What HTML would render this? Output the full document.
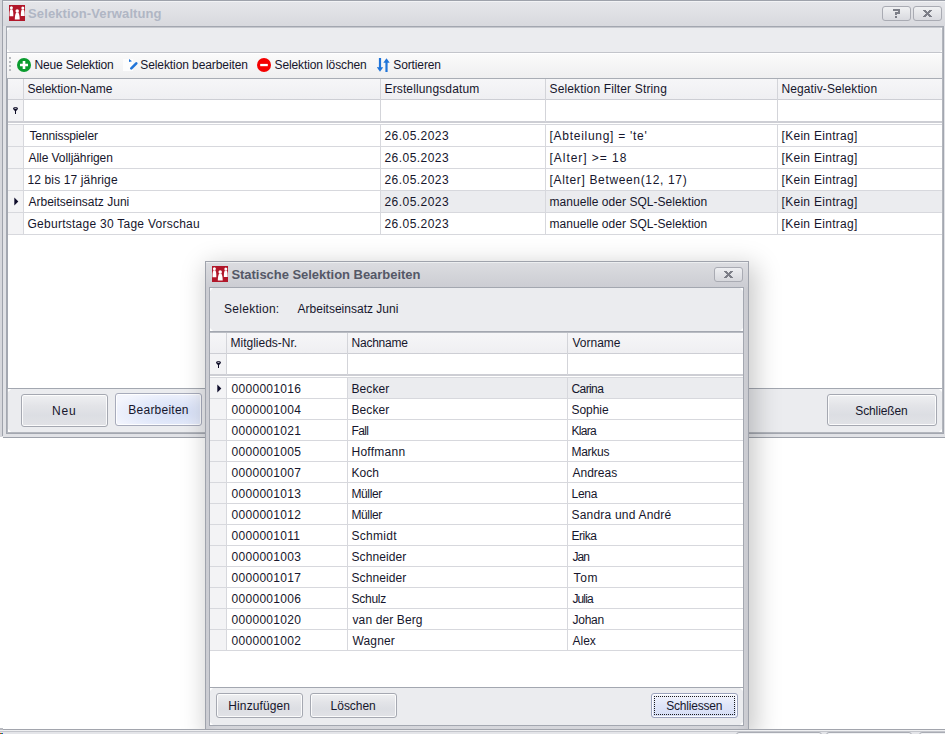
<!DOCTYPE html><html><head><meta charset="utf-8"><style>
*{margin:0;padding:0;box-sizing:border-box}
html,body{width:945px;height:734px;overflow:hidden;background:#fff;font-family:"Liberation Sans", sans-serif;font-size:12px;color:#16162c}
.a{position:absolute}
.t{position:absolute;white-space:nowrap;line-height:14px;font-size:12px}
.b{font-weight:bold;font-size:13px}
.btn{position:absolute;border:1px solid #a5a8b1;border-radius:3px;background:linear-gradient(#eff0f2,#e3e4e8 35%,#dcdee3 65%,#e1e2e6);box-shadow:inset 0 0 0 1px rgba(255,255,255,0.85)}
</style></head><body><div class="a" style="left:0px;top:0px;width:945px;height:438px;background:#e1e2e6"></div>
<div class="a" style="left:0px;top:0px;width:2px;height:437px;background:#d6d7dc"></div>
<div class="a" style="left:2px;top:0px;width:943px;height:1px;background:#9ea2ab"></div>
<div class="a" style="left:2px;top:0px;width:1px;height:436px;background:#9ea2ab"></div>
<div class="a" style="left:3px;top:437px;width:942px;height:1px;background:#9ea2ab"></div>
<div class="a" style="left:0px;top:437px;width:3px;height:1px;background:#fff"></div>
<div class="a" style="left:3px;top:1px;width:942px;height:1px;background:#f2f3f5"></div>
<div class="a" style="left:3px;top:2px;width:942px;height:24px;background:linear-gradient(#e5e6ea,#d8d9de)"></div>
<svg class="a" style="left:9px;top:5px" width="16" height="16" viewBox="0 0 16 16"><rect width="16" height="16" fill="#b1172a"/><g fill="#fff"><circle cx="2.4" cy="2.8" r="1.5"/><path d="M1.5 4.3C0.6 5.5 0.4 8 0.5 11.3L4.3 11.3C4.4 8 4.2 5.5 3.3 4.3z"/><circle cx="13.8" cy="3" r="1.5"/><path d="M12.9 4.5C12 5.7 11.8 8 11.9 11L15.7 11C15.7 8 15.5 5.7 14.7 4.5z"/><circle cx="8.2" cy="5.9" r="1.75"/><path d="M7.2 7.5C6.2 9 5.8 11.5 5.8 14.6L10.7 14.6C10.7 11.5 10.3 9 9.3 7.5z"/></g></svg>
<div class="t b" style="left:28.1px;top:7px;letter-spacing:0.105px;color:#b0b6c4">Selektion-Verwaltung</div>
<div class="a" style="left:882px;top:6px;width:29px;height:15px;border:1px solid #a9abb3;border-radius:3px;background:linear-gradient(#f0f1f3,#d9dadf)"></div>
<svg class="a" style="left:893px;top:9px" width="8" height="9" viewBox="0 0 8 9" shape-rendering="crispEdges"><g fill="#72747e" opacity="0.9"><rect x="0" y="0" width="7" height="2"/><rect x="5" y="0" width="2" height="4"/><rect x="2" y="3" width="5" height="2"/><rect x="2" y="4" width="2" height="2"/><rect x="2" y="7" width="2" height="2"/></g></svg>
<div class="a" style="left:913px;top:6px;width:29px;height:15px;border:1px solid #a9abb3;border-radius:3px;background:linear-gradient(#f0f1f3,#d9dadf)"></div>
<svg class="a" style="left:923px;top:10px" width="9" height="7" viewBox="0 0 9 7" shape-rendering="crispEdges"><g fill="#72747e" opacity="0.9"><rect x="0" y="0" width="1" height="1"/><rect x="1" y="0" width="1" height="1"/><rect x="2" y="0" width="1" height="1"/><rect x="6" y="0" width="1" height="1"/><rect x="7" y="0" width="1" height="1"/><rect x="8" y="0" width="1" height="1"/><rect x="1" y="1" width="1" height="1"/><rect x="2" y="1" width="1" height="1"/><rect x="3" y="1" width="1" height="1"/><rect x="5" y="1" width="1" height="1"/><rect x="6" y="1" width="1" height="1"/><rect x="7" y="1" width="1" height="1"/><rect x="2" y="2" width="1" height="1"/><rect x="3" y="2" width="1" height="1"/><rect x="4" y="2" width="1" height="1"/><rect x="5" y="2" width="1" height="1"/><rect x="6" y="2" width="1" height="1"/><rect x="3" y="3" width="1" height="1"/><rect x="4" y="3" width="1" height="1"/><rect x="5" y="3" width="1" height="1"/><rect x="2" y="4" width="1" height="1"/><rect x="3" y="4" width="1" height="1"/><rect x="4" y="4" width="1" height="1"/><rect x="5" y="4" width="1" height="1"/><rect x="6" y="4" width="1" height="1"/><rect x="1" y="5" width="1" height="1"/><rect x="2" y="5" width="1" height="1"/><rect x="3" y="5" width="1" height="1"/><rect x="5" y="5" width="1" height="1"/><rect x="6" y="5" width="1" height="1"/><rect x="7" y="5" width="1" height="1"/><rect x="0" y="6" width="1" height="1"/><rect x="1" y="6" width="1" height="1"/><rect x="2" y="6" width="1" height="1"/><rect x="6" y="6" width="1" height="1"/><rect x="7" y="6" width="1" height="1"/><rect x="8" y="6" width="1" height="1"/></g></svg>
<div class="a" style="left:6px;top:26px;width:938px;height:408px;background:#ebecef;border:1px solid #a3a7b0"></div>
<div class="a" style="left:7px;top:27px;width:936px;height:1px;background:#c6c8ce"></div>
<svg class="a" style="left:7px;top:28px" width="3" height="3" viewBox="0 0 3 3"><path d="M0 0H3L0 3z" fill="#fff" transform="rotate(0 1.5 1.5)"/></svg>
<svg class="a" style="left:940px;top:28px" width="3" height="3" viewBox="0 0 3 3"><path d="M0 0H3L0 3z" fill="#fff" transform="rotate(90 1.5 1.5)"/></svg>
<svg class="a" style="left:7px;top:49px" width="3" height="3" viewBox="0 0 3 3"><path d="M0 0H3L0 3z" fill="#fff" transform="rotate(270 1.5 1.5)"/></svg>
<svg class="a" style="left:940px;top:49px" width="3" height="3" viewBox="0 0 3 3"><path d="M0 0H3L0 3z" fill="#fff" transform="rotate(180 1.5 1.5)"/></svg>
<div class="a" style="left:7px;top:52px;width:936px;height:1px;background:#c3c5cb"></div>
<div class="a" style="left:7px;top:53px;width:935px;height:25px;background:linear-gradient(#fbfbfb,#efeff0)"></div>
<div class="a" style="left:7px;top:53px;width:935px;height:1px;background:#fff"></div>
<div class="a" style="left:9px;top:57px;width:2px;height:2px;background:#b9bbc0"></div>
<div class="a" style="left:9px;top:61px;width:2px;height:2px;background:#b9bbc0"></div>
<div class="a" style="left:9px;top:65px;width:2px;height:2px;background:#b9bbc0"></div>
<div class="a" style="left:9px;top:69px;width:2px;height:2px;background:#b9bbc0"></div>
<svg class="a" style="left:17px;top:58px" width="14" height="14" viewBox="0 0 14 14"><circle cx="7" cy="7" r="7" fill="#0a9b2e"/><path d="M7 3V11M3 7H11" stroke="#fff" stroke-width="2.6"/></svg>
<div class="t" style="left:34.4px;top:58px;letter-spacing:-0.154px;">Neue Selektion</div>
<svg class="a" style="left:123px;top:58px" width="16" height="14" viewBox="0 0 16 14"><rect x="0" y="1" width="10" height="12" fill="#fdfdfd"/><path d="M6 1L9 3.2L6 4z" fill="#1f74d9"/><path d="M8.3 10.3L13.3 5.3" stroke="#1f74d9" stroke-width="2.6" stroke-linecap="round"/></svg>
<div class="t" style="left:140.3px;top:58px;letter-spacing:-0.089px;">Selektion bearbeiten</div>
<svg class="a" style="left:257px;top:58px" width="14" height="14" viewBox="0 0 14 14"><circle cx="7" cy="7" r="7" fill="#f40000"/><rect x="3.2" y="5.9" width="7.6" height="2.3" fill="#fff"/></svg>
<div class="t" style="left:274.6px;top:58px;letter-spacing:-0.125px;">Selektion löschen</div>
<svg class="a" style="left:377px;top:57px" width="13" height="16" viewBox="0 0 13 16"><path d="M3 1V12.5" stroke="#1f74d9" stroke-width="2.2"/><path d="M-0.2 10.2L3 14.8L6.2 10.2z" fill="#1f74d9"/><path d="M9.5 15V3.5" stroke="#1f74d9" stroke-width="2.2"/><path d="M6.3 5.8L9.5 1.2L12.7 5.8z" fill="#1f74d9"/></svg>
<div class="t" style="left:393.3px;top:58px;letter-spacing:-0.125px;">Sortieren</div>
<div class="a" style="left:7px;top:78px;width:936px;height:311px;background:#fff;border-left:1px solid #a3a7b0;border-bottom:1px solid #a3a7b0"></div>
<div class="a" style="left:7px;top:78px;width:936px;height:1px;background:#a9adb5"></div>
<div class="a" style="left:8px;top:79px;width:935px;height:20px;background:linear-gradient(#f6f6f8,#efeff2)"></div>
<div class="a" style="left:8px;top:99px;width:935px;height:1px;background:#cdced4"></div>
<div class="a" style="left:8px;top:100px;width:15px;height:21px;background:#f3f3f5"></div>
<div class="a" style="left:8px;top:121px;width:935px;height:2px;background:#cdced4"></div>
<div class="a" style="left:8px;top:124px;width:935px;height:1px;background:#d7d8dd"></div>
<div class="a" style="left:23px;top:79px;width:1px;height:43px;background:#d3d4d9"></div>
<div class="a" style="left:380px;top:79px;width:1px;height:43px;background:#d3d4d9"></div>
<div class="a" style="left:545px;top:79px;width:1px;height:43px;background:#d3d4d9"></div>
<div class="a" style="left:777px;top:79px;width:1px;height:43px;background:#d3d4d9"></div>
<div class="t" style="left:27.5px;top:82px;letter-spacing:-0.038px;">Selektion-Name</div>
<div class="t" style="left:384.5px;top:82px;letter-spacing:0.133px;">Erstellungsdatum</div>
<div class="t" style="left:549.5px;top:82px;letter-spacing:0.15px;">Selektion Filter String</div>
<div class="t" style="left:781.5px;top:82px;letter-spacing:0.094px;">Negativ-Selektion</div>
<svg class="a" style="left:13px;top:107px" width="5" height="7" viewBox="0 0 5 7"><ellipse cx="2.5" cy="1.6" rx="2.5" ry="1.6" fill="#0d0c26"/><ellipse cx="2.5" cy="1.3" rx="1.2" ry="0.55" fill="#fff" opacity="0.85"/><path d="M0.7 2.4H4.3L3 4.3V7H2V4.3z" fill="#0d0c26"/></svg>
<div class="a" style="left:8px;top:125px;width:15px;height:21px;background:#f3f3f5"></div>
<div class="a" style="left:8px;top:146px;width:935px;height:1px;background:#d7d8dd"></div>
<div class="a" style="left:23px;top:125px;width:1px;height:21px;background:#d7d8dd"></div>
<div class="a" style="left:380px;top:125px;width:1px;height:21px;background:#d7d8dd"></div>
<div class="a" style="left:545px;top:125px;width:1px;height:21px;background:#d7d8dd"></div>
<div class="a" style="left:777px;top:125px;width:1px;height:21px;background:#d7d8dd"></div>
<div class="t" style="left:29.5px;top:129px;letter-spacing:-0.133px;">Tennisspieler</div>
<div class="t" style="left:384.5px;top:129px;letter-spacing:0.444px;">26.05.2023</div>
<div class="t" style="left:549.5px;top:129px;letter-spacing:0.724px;">[Abteilung] = 'te'</div>
<div class="t" style="left:781.5px;top:129px;letter-spacing:0.292px;">[Kein Eintrag]</div>
<div class="a" style="left:8px;top:147px;width:15px;height:21px;background:#f3f3f5"></div>
<div class="a" style="left:8px;top:168px;width:935px;height:1px;background:#d7d8dd"></div>
<div class="a" style="left:23px;top:147px;width:1px;height:21px;background:#d7d8dd"></div>
<div class="a" style="left:380px;top:147px;width:1px;height:21px;background:#d7d8dd"></div>
<div class="a" style="left:545px;top:147px;width:1px;height:21px;background:#d7d8dd"></div>
<div class="a" style="left:777px;top:147px;width:1px;height:21px;background:#d7d8dd"></div>
<div class="t" style="left:28.5px;top:151px;letter-spacing:-0.062px;">Alle Volljährigen</div>
<div class="t" style="left:384.5px;top:151px;letter-spacing:0.444px;">26.05.2023</div>
<div class="t" style="left:549.5px;top:151px;letter-spacing:0.958px;">[Alter] &gt;= 18</div>
<div class="t" style="left:781.5px;top:151px;letter-spacing:0.292px;">[Kein Eintrag]</div>
<div class="a" style="left:8px;top:169px;width:15px;height:21px;background:#f3f3f5"></div>
<div class="a" style="left:8px;top:190px;width:935px;height:1px;background:#d7d8dd"></div>
<div class="a" style="left:23px;top:169px;width:1px;height:21px;background:#d7d8dd"></div>
<div class="a" style="left:380px;top:169px;width:1px;height:21px;background:#d7d8dd"></div>
<div class="a" style="left:545px;top:169px;width:1px;height:21px;background:#d7d8dd"></div>
<div class="a" style="left:777px;top:169px;width:1px;height:21px;background:#d7d8dd"></div>
<div class="t" style="left:27.5px;top:173px;letter-spacing:0.125px;">12 bis 17 jährige</div>
<div class="t" style="left:384.5px;top:173px;letter-spacing:0.444px;">26.05.2023</div>
<div class="t" style="left:549.5px;top:173px;letter-spacing:0.655px;">[Alter] Between(12, 17)</div>
<div class="t" style="left:781.5px;top:173px;letter-spacing:0.292px;">[Kein Eintrag]</div>
<div class="a" style="left:8px;top:191px;width:15px;height:21px;background:#f3f3f5"></div>
<div class="a" style="left:381px;top:191px;width:562px;height:21px;background:#ebecef"></div>
<div class="a" style="left:8px;top:212px;width:935px;height:1px;background:#d7d8dd"></div>
<div class="a" style="left:23px;top:191px;width:1px;height:21px;background:#d7d8dd"></div>
<div class="a" style="left:380px;top:191px;width:1px;height:21px;background:#d7d8dd"></div>
<div class="a" style="left:545px;top:191px;width:1px;height:21px;background:#d7d8dd"></div>
<div class="a" style="left:777px;top:191px;width:1px;height:21px;background:#d7d8dd"></div>
<div class="t" style="left:28.5px;top:195px;">Arbeitseinsatz Juni</div>
<div class="t" style="left:384.5px;top:195px;letter-spacing:0.444px;">26.05.2023</div>
<div class="t" style="left:549.5px;top:195px;letter-spacing:0.038px;">manuelle oder SQL-Selektion</div>
<div class="t" style="left:781.5px;top:195px;letter-spacing:0.292px;">[Kein Eintrag]</div>
<div class="a" style="left:8px;top:213px;width:15px;height:21px;background:#f3f3f5"></div>
<div class="a" style="left:8px;top:234px;width:935px;height:1px;background:#d7d8dd"></div>
<div class="a" style="left:23px;top:213px;width:1px;height:21px;background:#d7d8dd"></div>
<div class="a" style="left:380px;top:213px;width:1px;height:21px;background:#d7d8dd"></div>
<div class="a" style="left:545px;top:213px;width:1px;height:21px;background:#d7d8dd"></div>
<div class="a" style="left:777px;top:213px;width:1px;height:21px;background:#d7d8dd"></div>
<div class="t" style="left:27.5px;top:217px;letter-spacing:0.259px;">Geburtstage 30 Tage Vorschau</div>
<div class="t" style="left:384.5px;top:217px;letter-spacing:0.444px;">26.05.2023</div>
<div class="t" style="left:549.5px;top:217px;letter-spacing:0.038px;">manuelle oder SQL-Selektion</div>
<div class="t" style="left:781.5px;top:217px;letter-spacing:0.292px;">[Kein Eintrag]</div>
<svg class="a" style="left:14px;top:197px" width="5" height="9" viewBox="0 0 5 9"><path d="M0.3 0.6L4.3 4.5L0.3 8.4z" fill="#0e0c2a"/></svg>
<svg class="a" style="left:8px;top:389px" width="3" height="3" viewBox="0 0 3 3"><path d="M0 0H3L0 3z" fill="#fff" transform="rotate(0 1.5 1.5)"/></svg>
<svg class="a" style="left:939px;top:389px" width="3" height="3" viewBox="0 0 3 3"><path d="M0 0H3L0 3z" fill="#fff" transform="rotate(90 1.5 1.5)"/></svg>
<svg class="a" style="left:8px;top:429px" width="3" height="3" viewBox="0 0 3 3"><path d="M0 0H3L0 3z" fill="#fff" transform="rotate(270 1.5 1.5)"/></svg>
<svg class="a" style="left:939px;top:429px" width="3" height="3" viewBox="0 0 3 3"><path d="M0 0H3L0 3z" fill="#fff" transform="rotate(180 1.5 1.5)"/></svg>
<div class="btn" style="left:21px;top:394px;width:87px;height:33px;"></div>
<div class="t" style="left:52px;top:404px;letter-spacing:0.8px;">Neu</div>
<div class="btn" style="left:115px;top:393px;width:87px;height:33px;background:radial-gradient(ellipse 80% 70% at 70% 60%,#d3ddf5,#e4eafa 60%,#f3f5fd);border-color:#a7abbb"></div>
<div class="t" style="left:128.3px;top:403px;letter-spacing:0.244px;">Bearbeiten</div>
<div class="btn" style="left:827px;top:394px;width:110px;height:32px;"></div>
<div class="t" style="left:855.3px;top:404px;letter-spacing:-0.125px;">Schließen</div>
<div class="a" style="left:942px;top:27px;width:1px;height:406px;background:#b3b6bd"></div>
<div class="a" style="left:7px;top:389px;width:1px;height:44px;background:#b3b6bd"></div>
<div class="a" style="left:7px;top:432px;width:936px;height:1px;background:#b3b6bd"></div>
<div class="a" style="left:205px;top:261px;width:544px;height:469px;box-shadow:4px 7px 24px 3px rgba(0,0,0,0.21)"></div>
<div class="a" style="left:205px;top:261px;width:544px;height:469px;background:linear-gradient(90deg,#cbccd2,#d3d4d9 2%,#d6d7dc 50%,#d3d4d9 98%,#c9cad0);border:1px solid #9fa3ac"></div>
<div class="a" style="left:206px;top:262px;width:542px;height:1px;background:#eceef0"></div>
<div class="a" style="left:206px;top:263px;width:542px;height:24px;background:linear-gradient(#dbdce0,#cccdd3)"></div>
<svg class="a" style="left:212px;top:266px" width="16" height="16" viewBox="0 0 16 16"><rect width="16" height="16" fill="#b1172a"/><g fill="#fff"><circle cx="2.4" cy="2.8" r="1.5"/><path d="M1.5 4.3C0.6 5.5 0.4 8 0.5 11.3L4.3 11.3C4.4 8 4.2 5.5 3.3 4.3z"/><circle cx="13.8" cy="3" r="1.5"/><path d="M12.9 4.5C12 5.7 11.8 8 11.9 11L15.7 11C15.7 8 15.5 5.7 14.7 4.5z"/><circle cx="8.2" cy="5.9" r="1.75"/><path d="M7.2 7.5C6.2 9 5.8 11.5 5.8 14.6L10.7 14.6C10.7 11.5 10.3 9 9.3 7.5z"/></g></svg>
<div class="t b" style="left:231.4px;top:268px;letter-spacing:-0.034px;color:#545867">Statische Selektion Bearbeiten</div>
<div class="a" style="left:714px;top:267px;width:29px;height:15px;border:1px solid #a9abb3;border-radius:3px;background:linear-gradient(#eeeff2,#d7d8dd)"></div>
<svg class="a" style="left:724px;top:271px" width="9" height="7" viewBox="0 0 9 7" shape-rendering="crispEdges"><g fill="#72747e" opacity="0.9"><rect x="0" y="0" width="1" height="1"/><rect x="1" y="0" width="1" height="1"/><rect x="2" y="0" width="1" height="1"/><rect x="6" y="0" width="1" height="1"/><rect x="7" y="0" width="1" height="1"/><rect x="8" y="0" width="1" height="1"/><rect x="1" y="1" width="1" height="1"/><rect x="2" y="1" width="1" height="1"/><rect x="3" y="1" width="1" height="1"/><rect x="5" y="1" width="1" height="1"/><rect x="6" y="1" width="1" height="1"/><rect x="7" y="1" width="1" height="1"/><rect x="2" y="2" width="1" height="1"/><rect x="3" y="2" width="1" height="1"/><rect x="4" y="2" width="1" height="1"/><rect x="5" y="2" width="1" height="1"/><rect x="6" y="2" width="1" height="1"/><rect x="3" y="3" width="1" height="1"/><rect x="4" y="3" width="1" height="1"/><rect x="5" y="3" width="1" height="1"/><rect x="2" y="4" width="1" height="1"/><rect x="3" y="4" width="1" height="1"/><rect x="4" y="4" width="1" height="1"/><rect x="5" y="4" width="1" height="1"/><rect x="6" y="4" width="1" height="1"/><rect x="1" y="5" width="1" height="1"/><rect x="2" y="5" width="1" height="1"/><rect x="3" y="5" width="1" height="1"/><rect x="5" y="5" width="1" height="1"/><rect x="6" y="5" width="1" height="1"/><rect x="7" y="5" width="1" height="1"/><rect x="0" y="6" width="1" height="1"/><rect x="1" y="6" width="1" height="1"/><rect x="2" y="6" width="1" height="1"/><rect x="6" y="6" width="1" height="1"/><rect x="7" y="6" width="1" height="1"/><rect x="8" y="6" width="1" height="1"/></g></svg>
<div class="a" style="left:209px;top:287px;width:535px;height:45px;background:#ebecef;border:1px solid #a3a7b0"></div>
<svg class="a" style="left:210px;top:288px" width="3" height="3" viewBox="0 0 3 3"><path d="M0 0H3L0 3z" fill="#fff" transform="rotate(0 1.5 1.5)"/></svg>
<svg class="a" style="left:740px;top:288px" width="3" height="3" viewBox="0 0 3 3"><path d="M0 0H3L0 3z" fill="#fff" transform="rotate(90 1.5 1.5)"/></svg>
<svg class="a" style="left:210px;top:328px" width="3" height="3" viewBox="0 0 3 3"><path d="M0 0H3L0 3z" fill="#fff" transform="rotate(270 1.5 1.5)"/></svg>
<svg class="a" style="left:740px;top:328px" width="3" height="3" viewBox="0 0 3 3"><path d="M0 0H3L0 3z" fill="#fff" transform="rotate(180 1.5 1.5)"/></svg>
<div class="t" style="left:224px;top:302px;letter-spacing:0.278px;">Selektion:</div>
<div class="t" style="left:297.6px;top:302px;">Arbeitseinsatz Juni</div>
<div class="a" style="left:209px;top:332px;width:535px;height:356px;background:#fff;border-left:1px solid #a3a7b0;border-right:1px solid #a3a7b0;border-bottom:1px solid #a3a7b0"></div>
<div class="a" style="left:210px;top:332px;width:533px;height:1px;background:#b9bcc3"></div>
<div class="a" style="left:210px;top:333px;width:533px;height:20px;background:linear-gradient(#f6f6f8,#efeff2)"></div>
<div class="a" style="left:210px;top:353px;width:533px;height:1px;background:#cdced4"></div>
<div class="a" style="left:210px;top:354px;width:16px;height:20px;background:#f3f3f5"></div>
<div class="a" style="left:210px;top:374px;width:533px;height:2px;background:#cdced4"></div>
<div class="a" style="left:210px;top:377px;width:533px;height:1px;background:#d7d8dd"></div>
<div class="a" style="left:226px;top:333px;width:1px;height:42px;background:#d3d4d9"></div>
<div class="a" style="left:347px;top:333px;width:1px;height:42px;background:#d3d4d9"></div>
<div class="a" style="left:567px;top:333px;width:1px;height:42px;background:#d3d4d9"></div>
<div class="t" style="left:230.5px;top:336px;">Mitglieds-Nr.</div>
<div class="t" style="left:351.5px;top:336px;letter-spacing:-0.229px;">Nachname</div>
<div class="t" style="left:572.5px;top:336px;">Vorname</div>
<svg class="a" style="left:216px;top:361px" width="5" height="7" viewBox="0 0 5 7"><ellipse cx="2.5" cy="1.6" rx="2.5" ry="1.6" fill="#0d0c26"/><ellipse cx="2.5" cy="1.3" rx="1.2" ry="0.55" fill="#fff" opacity="0.85"/><path d="M0.7 2.4H4.3L3 4.3V7H2V4.3z" fill="#0d0c26"/></svg>
<div class="a" style="left:210px;top:378px;width:16px;height:20px;background:#f3f3f5"></div>
<div class="a" style="left:348px;top:378px;width:395px;height:20px;background:#ebecef"></div>
<div class="a" style="left:210px;top:398px;width:533px;height:1px;background:#d7d8dd"></div>
<div class="a" style="left:226px;top:378px;width:1px;height:20px;background:#d7d8dd"></div>
<div class="a" style="left:347px;top:378px;width:1px;height:20px;background:#d7d8dd"></div>
<div class="a" style="left:567px;top:378px;width:1px;height:20px;background:#d7d8dd"></div>
<div class="t" style="left:231.5px;top:382px;letter-spacing:0.3px">0000001016</div>
<div class="t" style="left:351.5px;top:382px;letter-spacing:0.08px">Becker</div>
<div class="t" style="left:571.5px;top:382px;letter-spacing:-0.6px">Carina</div>
<div class="a" style="left:210px;top:399px;width:16px;height:20px;background:#f3f3f5"></div>
<div class="a" style="left:210px;top:419px;width:533px;height:1px;background:#d7d8dd"></div>
<div class="a" style="left:226px;top:399px;width:1px;height:20px;background:#d7d8dd"></div>
<div class="a" style="left:347px;top:399px;width:1px;height:20px;background:#d7d8dd"></div>
<div class="a" style="left:567px;top:399px;width:1px;height:20px;background:#d7d8dd"></div>
<div class="t" style="left:231.5px;top:403px;letter-spacing:0.3px">0000001004</div>
<div class="t" style="left:351.5px;top:403px;letter-spacing:0.08px">Becker</div>
<div class="t" style="left:571.5px;top:403px;letter-spacing:-0.04px">Sophie</div>
<div class="a" style="left:210px;top:420px;width:16px;height:20px;background:#f3f3f5"></div>
<div class="a" style="left:210px;top:440px;width:533px;height:1px;background:#d7d8dd"></div>
<div class="a" style="left:226px;top:420px;width:1px;height:20px;background:#d7d8dd"></div>
<div class="a" style="left:347px;top:420px;width:1px;height:20px;background:#d7d8dd"></div>
<div class="a" style="left:567px;top:420px;width:1px;height:20px;background:#d7d8dd"></div>
<div class="t" style="left:231.5px;top:424px;letter-spacing:0.3px">0000001021</div>
<div class="t" style="left:351.5px;top:424px;letter-spacing:-0.667px">Fall</div>
<div class="t" style="left:571.5px;top:424px;letter-spacing:-0.7px">Klara</div>
<div class="a" style="left:210px;top:441px;width:16px;height:20px;background:#f3f3f5"></div>
<div class="a" style="left:210px;top:461px;width:533px;height:1px;background:#d7d8dd"></div>
<div class="a" style="left:226px;top:441px;width:1px;height:20px;background:#d7d8dd"></div>
<div class="a" style="left:347px;top:441px;width:1px;height:20px;background:#d7d8dd"></div>
<div class="a" style="left:567px;top:441px;width:1px;height:20px;background:#d7d8dd"></div>
<div class="t" style="left:231.5px;top:445px;letter-spacing:0.3px">0000001005</div>
<div class="t" style="left:351.5px;top:445px;letter-spacing:0.257px">Hoffmann</div>
<div class="t" style="left:571.5px;top:445px;letter-spacing:-0.28px">Markus</div>
<div class="a" style="left:210px;top:462px;width:16px;height:20px;background:#f3f3f5"></div>
<div class="a" style="left:210px;top:482px;width:533px;height:1px;background:#d7d8dd"></div>
<div class="a" style="left:226px;top:462px;width:1px;height:20px;background:#d7d8dd"></div>
<div class="a" style="left:347px;top:462px;width:1px;height:20px;background:#d7d8dd"></div>
<div class="a" style="left:567px;top:462px;width:1px;height:20px;background:#d7d8dd"></div>
<div class="t" style="left:231.5px;top:466px;letter-spacing:0.3px">0000001007</div>
<div class="t" style="left:351.5px;top:466px;letter-spacing:0.0px">Koch</div>
<div class="t" style="left:572.5px;top:466px;letter-spacing:0.0px">Andreas</div>
<div class="a" style="left:210px;top:483px;width:16px;height:20px;background:#f3f3f5"></div>
<div class="a" style="left:210px;top:503px;width:533px;height:1px;background:#d7d8dd"></div>
<div class="a" style="left:226px;top:483px;width:1px;height:20px;background:#d7d8dd"></div>
<div class="a" style="left:347px;top:483px;width:1px;height:20px;background:#d7d8dd"></div>
<div class="a" style="left:567px;top:483px;width:1px;height:20px;background:#d7d8dd"></div>
<div class="t" style="left:231.5px;top:487px;letter-spacing:0.3px">0000001013</div>
<div class="t" style="left:351.5px;top:487px;letter-spacing:-0.4px">Müller</div>
<div class="t" style="left:571.5px;top:487px;letter-spacing:-0.267px">Lena</div>
<div class="a" style="left:210px;top:504px;width:16px;height:20px;background:#f3f3f5"></div>
<div class="a" style="left:210px;top:524px;width:533px;height:1px;background:#d7d8dd"></div>
<div class="a" style="left:226px;top:504px;width:1px;height:20px;background:#d7d8dd"></div>
<div class="a" style="left:347px;top:504px;width:1px;height:20px;background:#d7d8dd"></div>
<div class="a" style="left:567px;top:504px;width:1px;height:20px;background:#d7d8dd"></div>
<div class="t" style="left:231.5px;top:508px;letter-spacing:0.3px">0000001012</div>
<div class="t" style="left:351.5px;top:508px;letter-spacing:-0.4px">Müller</div>
<div class="t" style="left:571.5px;top:508px;letter-spacing:0.2px">Sandra und André</div>
<div class="a" style="left:210px;top:525px;width:16px;height:20px;background:#f3f3f5"></div>
<div class="a" style="left:210px;top:545px;width:533px;height:1px;background:#d7d8dd"></div>
<div class="a" style="left:226px;top:525px;width:1px;height:20px;background:#d7d8dd"></div>
<div class="a" style="left:347px;top:525px;width:1px;height:20px;background:#d7d8dd"></div>
<div class="a" style="left:567px;top:525px;width:1px;height:20px;background:#d7d8dd"></div>
<div class="t" style="left:231.5px;top:529px;letter-spacing:0.3px">0000001011</div>
<div class="t" style="left:351.5px;top:529px;letter-spacing:0.3px">Schmidt</div>
<div class="t" style="left:571.5px;top:529px;letter-spacing:-0.45px">Erika</div>
<div class="a" style="left:210px;top:546px;width:16px;height:20px;background:#f3f3f5"></div>
<div class="a" style="left:210px;top:566px;width:533px;height:1px;background:#d7d8dd"></div>
<div class="a" style="left:226px;top:546px;width:1px;height:20px;background:#d7d8dd"></div>
<div class="a" style="left:347px;top:546px;width:1px;height:20px;background:#d7d8dd"></div>
<div class="a" style="left:567px;top:546px;width:1px;height:20px;background:#d7d8dd"></div>
<div class="t" style="left:231.5px;top:550px;letter-spacing:0.3px">0000001003</div>
<div class="t" style="left:351.5px;top:550px;letter-spacing:0.088px">Schneider</div>
<div class="t" style="left:572.5px;top:550px;letter-spacing:-1.0px">Jan</div>
<div class="a" style="left:210px;top:567px;width:16px;height:20px;background:#f3f3f5"></div>
<div class="a" style="left:210px;top:587px;width:533px;height:1px;background:#d7d8dd"></div>
<div class="a" style="left:226px;top:567px;width:1px;height:20px;background:#d7d8dd"></div>
<div class="a" style="left:347px;top:567px;width:1px;height:20px;background:#d7d8dd"></div>
<div class="a" style="left:567px;top:567px;width:1px;height:20px;background:#d7d8dd"></div>
<div class="t" style="left:231.5px;top:571px;letter-spacing:0.3px">0000001017</div>
<div class="t" style="left:351.5px;top:571px;letter-spacing:0.088px">Schneider</div>
<div class="t" style="left:573.5px;top:571px;letter-spacing:0.7px">Tom</div>
<div class="a" style="left:210px;top:588px;width:16px;height:20px;background:#f3f3f5"></div>
<div class="a" style="left:210px;top:608px;width:533px;height:1px;background:#d7d8dd"></div>
<div class="a" style="left:226px;top:588px;width:1px;height:20px;background:#d7d8dd"></div>
<div class="a" style="left:347px;top:588px;width:1px;height:20px;background:#d7d8dd"></div>
<div class="a" style="left:567px;top:588px;width:1px;height:20px;background:#d7d8dd"></div>
<div class="t" style="left:231.5px;top:592px;letter-spacing:0.3px">0000001006</div>
<div class="t" style="left:351.5px;top:592px;letter-spacing:-0.26px">Schulz</div>
<div class="t" style="left:572.5px;top:592px;letter-spacing:-0.9px">Julia</div>
<div class="a" style="left:210px;top:609px;width:16px;height:20px;background:#f3f3f5"></div>
<div class="a" style="left:210px;top:629px;width:533px;height:1px;background:#d7d8dd"></div>
<div class="a" style="left:226px;top:609px;width:1px;height:20px;background:#d7d8dd"></div>
<div class="a" style="left:347px;top:609px;width:1px;height:20px;background:#d7d8dd"></div>
<div class="a" style="left:567px;top:609px;width:1px;height:20px;background:#d7d8dd"></div>
<div class="t" style="left:231.5px;top:613px;letter-spacing:0.3px">0000001020</div>
<div class="t" style="left:352.5px;top:613px;letter-spacing:0.118px">van der Berg</div>
<div class="t" style="left:572.5px;top:613px;letter-spacing:-0.25px">Johan</div>
<div class="a" style="left:210px;top:630px;width:16px;height:20px;background:#f3f3f5"></div>
<div class="a" style="left:210px;top:650px;width:533px;height:1px;background:#d7d8dd"></div>
<div class="a" style="left:226px;top:630px;width:1px;height:20px;background:#d7d8dd"></div>
<div class="a" style="left:347px;top:630px;width:1px;height:20px;background:#d7d8dd"></div>
<div class="a" style="left:567px;top:630px;width:1px;height:20px;background:#d7d8dd"></div>
<div class="t" style="left:231.5px;top:634px;letter-spacing:0.3px">0000001002</div>
<div class="t" style="left:352.5px;top:634px;letter-spacing:0.14px">Wagner</div>
<div class="t" style="left:572.5px;top:634px;letter-spacing:0.0px">Alex</div>
<svg class="a" style="left:217px;top:384px" width="5" height="9" viewBox="0 0 5 9"><path d="M0.3 0.6L4.3 4.5L0.3 8.4z" fill="#0e0c2a"/></svg>
<div class="a" style="left:209px;top:688px;width:535px;height:38px;background:#ebecef;border:1px solid #a3a7b0;border-top:none"></div>
<svg class="a" style="left:210px;top:688px" width="3" height="3" viewBox="0 0 3 3"><path d="M0 0H3L0 3z" fill="#fff" transform="rotate(0 1.5 1.5)"/></svg>
<svg class="a" style="left:740px;top:688px" width="3" height="3" viewBox="0 0 3 3"><path d="M0 0H3L0 3z" fill="#fff" transform="rotate(90 1.5 1.5)"/></svg>
<svg class="a" style="left:210px;top:722px" width="3" height="3" viewBox="0 0 3 3"><path d="M0 0H3L0 3z" fill="#fff" transform="rotate(270 1.5 1.5)"/></svg>
<svg class="a" style="left:740px;top:722px" width="3" height="3" viewBox="0 0 3 3"><path d="M0 0H3L0 3z" fill="#fff" transform="rotate(180 1.5 1.5)"/></svg>
<div class="btn" style="left:216px;top:693px;width:87px;height:25px;"></div>
<div class="t" style="left:228.3px;top:699px;letter-spacing:0.111px;">Hinzufügen</div>
<div class="btn" style="left:310px;top:693px;width:87px;height:25px;"></div>
<div class="t" style="left:330.6px;top:699px;letter-spacing:-0.033px;">Löschen</div>
<div class="btn" style="left:651px;top:693px;width:87px;height:25px;background:linear-gradient(#f3f5fd,#dfe5f8 50%,#d5ddf6);border-color:#9ca3bd"></div>
<div class="t" style="left:666.3px;top:699px;letter-spacing:-0.222px;">Schliessen</div>
<div class="a" style="left:654px;top:696px;width:81px;height:19px;border:1px dotted #1a1a1a"></div>
<div class="a" style="left:0px;top:729px;width:945px;height:1px;background:#a2a5ad"></div>
<div class="a" style="left:0px;top:730px;width:945px;height:1px;background:#eeeff1"></div>
<div class="a" style="left:0px;top:731px;width:945px;height:1px;background:#c4c6cc"></div>
<div class="a" style="left:0px;top:732px;width:945px;height:2px;background:#e4e5e9"></div>
<div class="a" style="left:736px;top:732px;width:86px;height:6px;border:1px solid #a9acb4;border-radius:3px;background:#f1f2f4"></div>
<div class="a" style="left:826px;top:732px;width:86px;height:6px;border:1px solid #a9acb4;border-radius:3px;background:#f1f2f4"></div>
<div class="a" style="left:919px;top:732px;width:40px;height:6px;border:1px solid #a9acb4;border-radius:3px;background:#f1f2f4"></div>
<div class="a" style="left:0px;top:728px;width:3px;height:2px;background:#b9bbc1"></div>
<div class="a" style="left:0px;top:733px;width:1px;height:1px;background:#e02020"></div>
<div class="a" style="left:1px;top:733px;width:1px;height:1px;background:#20b020"></div>
<div class="a" style="left:2px;top:733px;width:1px;height:1px;background:#2040e0"></div></body></html>
